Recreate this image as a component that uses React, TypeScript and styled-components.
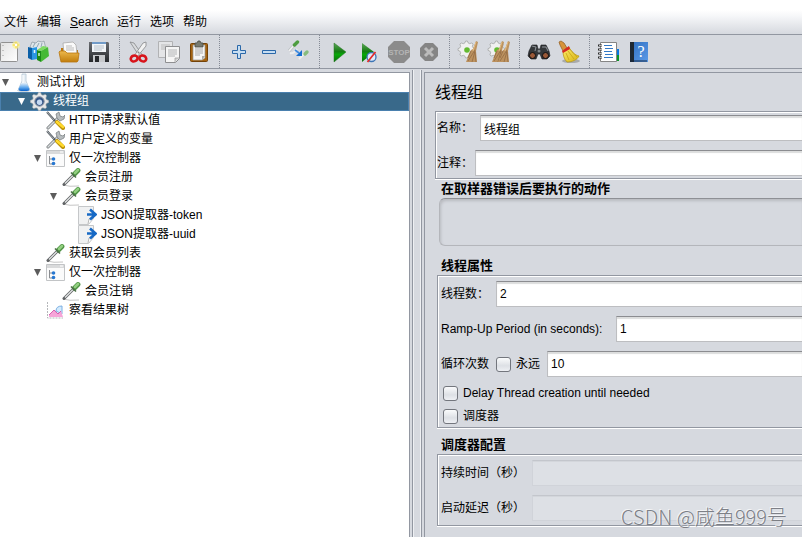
import React, { ReactNode } from "react";
import styled, { createGlobalStyle, css } from "styled-components";

const line = "#9297a1";
const panel = "#d6d9df";

const GlobalStyle = createGlobalStyle`
  * { box-sizing: border-box; }
  body {
    margin: 0;
    background: ${panel};
    color: #000;
    font: 12px/19px "Liberation Sans", "Noto Sans CJK SC", sans-serif;
  }
  button, input { font: inherit; color: inherit; }
`;

const Window = styled.div`
  position: relative;
  display: flex;
  flex-direction: column;
  min-height: 100vh;
  overflow: hidden;
`;

const MenuBar = styled.nav`
  display: flex;
  gap: 9px;
  height: 35px;
  padding: 13px 4px 2px;
  background: linear-gradient(#fff 10px, #f6f7f9 16px, ${panel});
  border-bottom: 1px solid ${line};
`;

const MenuButton = styled.button`
  padding: 0;
  border: 0;
  background: none;
  line-height: 19px;
  white-space: nowrap;
`;

const ToolBar = styled.div`
  display: flex;
  height: 34px;
  margin-left: -6px;
  border-bottom: 1px solid ${line};
`;

const ToolButton = styled.button`
  display: grid;
  place-items: center;
  flex: none;
  width: 30px;
  padding: 0;
  border: 0;
  background: none;
  svg { display: block; width: 24px; height: 24px; }
`;

const Separator = styled.div`
  flex: none;
  width: 5px;
  margin-left: 5px;
  border-left: 1px dotted #858a95;
`;

const Workspace = styled.main`
  display: grid;
  flex: 1;
  grid-template-columns: 410px 14px minmax(0, 1fr);
`;

const Tree = styled.ul`
  margin: 3px 0 0;
  padding: 0;
  list-style: none;
  background: #fff;
  border-top: 1px solid ${line};
  border-right: 1px solid ${line};
`;

const TreeRow = styled.li<{ $level: number; $selected?: boolean }>`
  display: flex;
  align-items: center;
  height: 19px;
  line-height: 21px;
  padding-left: ${(p) => p.$level * 16}px;
  white-space: nowrap;
  ${(p) =>
    p.$selected &&
    css`
      background: #39698a;
      color: #fff;
      box-shadow: inset 0 0 0 1px #4a80ae;
    `}
  > svg { flex: none; width: 19px; height: 19px; margin-right: 4px; }
`;

const Toggle = styled.button<{ $selected?: boolean }>`
  display: grid;
  place-items: center;
  width: 11px;
  height: 19px;
  margin-right: 3px;
  padding: 0;
  border: 0;
  background: none;
  color: ${(p) => (p.$selected ? "#fff" : "#5c5c5c")};
  svg { width: 7px; height: 7px; }
`;

const ToggleSpace = styled.span`
  width: 14px;
`;

const Divider = styled.div`
  margin: 1px 2px 0;
  border: solid ${line};
  border-width: 0 1px;
  box-shadow: inset 1px 0 #eef0f3, inset -1px 0 #eef0f3;
`;

const Editor = styled.form`
  margin-top: 3px;
  padding: 2px 0 0 10px;
  border-top: 1px solid ${line};
  border-left: 1px solid ${line};
`;

const Heading = styled.h1`
  margin: 0;
  font-size: 16px;
  line-height: 36px;
  font-weight: 400;
`;

const Etched = styled.div`
  display: flex;
  flex-direction: column;
  gap: 9px;
  border: 1px solid ${line};
  border-right: 0;
  box-shadow: inset 1px 1px #fff, 0 1px #fff;
`;

const NameGroup = styled(Etched)`
  padding: 3px 0 2px 1px;
`;

const PropertyGroup = styled(Etched)`
  padding: 5px 0 3px 3px;
`;

const SchedulerGroup = styled(PropertyGroup)`
  padding-bottom: 4px;
`;

const Section = styled.section`
  margin: 0 0 0 2px;
`;

const Title = styled.h2<{ $space?: number }>`
  margin: ${(p) => p.$space ?? 0}px 0 0 4px;
  font-size: 13px;
  line-height: 19px;
  font-weight: 700;
  white-space: nowrap;
`;

const ActionBox = styled.div`
  height: 48px;
  margin-left: 2px;
  border: 1px solid #b4b6bb;
  border-top-color: #8e9095;
  border-right: 0;
  border-radius: 6px 0 0 6px;
  box-shadow: inset 1px 2px 3px #b9bbc0;
`;

const FieldRow = styled.div<{ $tight?: boolean }>`
  display: flex;
  align-items: center;
  gap: ${(p) => (p.$tight ? 2 : 7)}px;
  height: 26px;
  line-height: 21px;
  white-space: nowrap;
`;

const FieldLabel = styled.label<{ $width?: number }>`
  min-width: ${(p) => p.$width ?? 0}px;
`;

const TextField = styled.input`
  flex: 1;
  min-width: 0;
  height: 26px;
  padding: 0 3px;
  border: 1px solid #bdbec1;
  border-top-color: #8b8c90;
  border-right: 0;
  border-radius: 0;
  background: #fff;
  box-shadow: inset 0 2px 1px #dcdddd;
  outline: 0;
  &:disabled {
    background: #dde0e5;
    border-color: #d0d3d9;
    border-top-color: #c3c6cc;
    box-shadow: inset 0 1px #d3d6db;
  }
`;

const Checks = styled.div`
  display: grid;
  gap: 8px;
  padding-left: 2px;
`;

const CheckLabel = styled.label`
  display: flex;
  align-items: center;
  gap: 5px;
  height: 15px;
`;

const CheckBox = styled.input`
  appearance: none;
  width: 15px;
  height: 15px;
  margin: 0;
  border: 1px solid #73767d;
  border-radius: 3px;
  background: linear-gradient(#fafbfc, #dde0e5 60%, #eef0f4);
`;

const Watermark = styled.div`
  position: absolute;
  right: 15px;
  bottom: 5px;
  color: rgba(112, 115, 122, 0.9);
  font: 300 20px/30px "Noto Sans CJK SC", sans-serif;
  text-shadow: -1px -1px #f3f4f6;
  pointer-events: none;
`;

const Svg = ({ children, size = 24 }: { children: ReactNode; size?: number }) => (
  <svg viewBox={`0 0 ${size} ${size}`} aria-hidden="true">{children}</svg>
);

const gearPath = (cx: number, cy: number, r: number) =>
  Array.from({ length: 32 }, (_, i) => {
    const a = ((i - 0.5) * Math.PI) / 16;
    const d = i % 4 < 2 ? r : r * 0.78;
    return `${i ? "L" : "M"}${(cx + d * Math.cos(a)).toFixed(2)} ${(cy + d * Math.sin(a)).toFixed(2)}`;
  }).join("") + "Z";

const HiddenSvg = styled.svg`
  position: absolute;
`;

const Defs = () => (
  <HiddenSvg width="0" height="0" aria-hidden="true">
    <defs>
      <linearGradient id="paper" x2="1" y2="1"><stop stopColor="#e2e2e2" /><stop offset="1" stopColor="#fff" /></linearGradient>
      <linearGradient id="folder" y2="1" x2="0"><stop stopColor="#edb94d" /><stop offset="1" stopColor="#c17d0c" /></linearGradient>
      <linearGradient id="dark" y2="1" x2="0"><stop stopColor="#6a6d72" /><stop offset="1" stopColor="#26282b" /></linearGradient>
      <linearGradient id="play" y2="1" x2="0"><stop stopColor="#5fa55b" /><stop offset=".45" stopColor="#157d12" /><stop offset=".6" stopColor="#08a808" /><stop offset="1" stopColor="#087008" /></linearGradient>
      <linearGradient id="book" x2="1" y2="1"><stop stopColor="#2f6fc0" /><stop offset="1" stopColor="#5b9ae8" /></linearGradient>
      <linearGradient id="straw" x2="1" y2="1"><stop stopColor="#fff06a" /><stop offset="1" stopColor="#d6b010" /></linearGradient>
      <linearGradient id="glass" y2="1" x2="0"><stop stopColor="#e4eff8" /><stop offset=".55" stopColor="#61a9ed" /><stop offset="1" stopColor="#0862cd" /></linearGradient>
    </defs>
  </HiddenSvg>
);

const NewIcon = () => (
  <Svg>
    <rect x="3.5" y="2.5" width="17" height="19" rx="1" fill="url(#paper)" stroke="#919191" />
    <path d="M6 5v14" stroke="#999" strokeDasharray="1 4" />
    <circle cx="19" cy="5" r="3.8" fill="#fff394" opacity=".7" />
    <path d="m19 1 1 3 3 1-3 1-1 3-1-3-3-1 3-1z" fill="#f4da39" />
    <circle cx="19" cy="5" r="1.4" fill="#fff" />
  </Svg>
);
const TemplatesIcon = () => (
  <Svg>
    <path d="m3 7 2-5 4 1 2-2 4 1 2-1 2 8-9 3z" fill="#dfe6ea" stroke="#93a0a8" strokeWidth=".8" />
    <path d="m6 7 2-4m2 4 2-4m2 4 1-4" stroke="#8fa5b2" />
    <path d="m1 7 4 1v12l-4-2z" fill="#0a5fa8" /><path d="m5 8 5-1v12l-5 1z" fill="#2b97e6" />
    <path d="M7.5 10v3" stroke="#e4f4ff" strokeWidth="1.6" />
    <path d="m10 10 4 1v11l-4-2z" fill="#1c8a1a" /><path d="m14 11 7-4 1 9-8 6z" fill="#45b934" />
    <path d="m10 10 6-4 5 1-7 4z" fill="#7ddb62" /><path d="M12 13v3" stroke="#e2fadb" strokeWidth="1.4" />
  </Svg>
);
const OpenIcon = () => (
  <Svg>
    <path d="M4 8h6l2 2h9v11H4z" fill="#bd780d" />
    <path d="m6 3 10-1 3 3 1 9H7z" fill="#fafafa" stroke="#aaa" strokeWidth=".8" /><path d="M9 6h6M9 8h8m-8 2h8" stroke="#bbb" />
    <path d="m2 12 1-1h5l2 2h12l-1 8-1 1H4z" fill="url(#folder)" stroke="#b9760f" strokeWidth=".8" />
  </Svg>
);
const SaveIcon = () => (
  <Svg>
    <path d="M2 2h19l1 1v19H2z" fill="url(#dark)" /><path d="M5 2h14v10H5z" fill="#f2f5f8" /><path d="M5 2h14v2H5z" fill="#719bc8" />
    <path d="M7 6h10M7 8h10m-10 2h8" stroke="#b8c1ca" /><path d="M6 15h12v7H6z" fill="#c7c9cc" /><path d="M8 16h4v6H8z" fill="#27292c" />
  </Svg>
);
const CutIcon = () => (
  <Svg>
    <path d="m3 2 4 1 9 13-3 1z" fill="#d9dbdd" stroke="#858789" strokeWidth=".8" /><path d="m19 2-3 1-9 13 3 1L19 6z" fill="#f2f2f2" stroke="#858789" strokeWidth=".8" />
    <ellipse cx="7" cy="18.5" rx="3.5" ry="2.8" fill="none" stroke="#d8141b" strokeWidth="2.6" transform="rotate(-20 7 18)" />
    <ellipse cx="16" cy="18.5" rx="3.5" ry="2.8" fill="none" stroke="#d8141b" strokeWidth="2.6" transform="rotate(20 16 18)" />
    <circle cx="11.5" cy="12.5" r="1" fill="#888" />
  </Svg>
);
const CopyIcon = () => (
  <Svg>
    <path d="M1.5 1.5h14v16h-14z" fill="#e4e5e7" stroke="#b1b2b4" /><path d="M4 5h9M4 7h9M4 9h9" stroke="#bbb" />
    <path d="M8.5 6.5h14v12l-4 4h-10z" fill="#f5f5f5" stroke="#8e8f91" /><path d="M11 10h9m-9 2h9m-9 2h9m-9 2h7" stroke="#b2b4b6" /><path d="M18 22v-4h4" fill="#d2d3d4" stroke="#999" strokeWidth=".7" />
  </Svg>
);
const PasteIcon = () => (
  <Svg>
    <rect x="3.5" y="3.5" width="17" height="18" rx="1" fill="#a66411" stroke="#744308" /><path d="M6 5h12v13l-3 2H6z" fill="#f5f5f5" stroke="#9a9a92" strokeWidth=".7" />
    <path d="M8 9h8m-8 2h8m-8 2h8m-8 2h5" stroke="#aaa" /><path d="M15 20v-4h3z" fill="#aaa" />
    <path d="M8 3h2l1-2h2l1 2h2v4H8z" fill="#777a70" stroke="#494b45" strokeWidth=".8" />
  </Svg>
);
const PlusIcon = () => <Svg><path d="M10.5 5.5h3v5h5v3h-5v5h-3v-5h-5v-3h5z" fill="#c7def2" stroke="#2b68a9" /></Svg>;
const MinusIcon = () => <Svg><path d="M5.5 10.5h13v3h-13z" fill="#c7def2" stroke="#2b68a9" /></Svg>;
const ToggleIcon = () => (
  <Svg>
    <path d="m2 11 6-7" stroke="#b9bdc2" strokeWidth="3" /><path d="m2 11 6-7" stroke="#f2f2f2" strokeWidth="1.8" /><path d="m7.5 5 3-3" stroke="#4e9d40" strokeWidth="3.4" strokeLinecap="round" />
    <path d="M3 13c3 1 5-1 7-4M12 19l6-6" stroke="#eee" strokeWidth="2" fill="none" /><path d="m18 14 2-2" stroke="#87bc7d" strokeWidth="3.4" strokeLinecap="round" />
    <path d="m8 10 4 3" stroke="#3f8be0" strokeWidth="1.6" fill="none" /><path d="m15 10v6H9z" fill="#176fd1" />
  </Svg>
);
const PlayIcon = () => <Svg><path d="m7 3 12 9L7 22z" fill="url(#play)" stroke="#247622" strokeWidth=".5" /></Svg>;
const PlayNoPauseIcon = () => (
  <Svg><path d="m5 3 12 9L5 22z" fill="url(#play)" /><circle cx="14.5" cy="17" r="4.5" fill="#dfeafb" stroke="#3d75b4" strokeWidth="1.3" /><path d="m10.5 22 8-10" stroke="#e32929" strokeWidth="1.7" /></Svg>
);
const octagon = (a: number, b: number, c: number) => `M${a + c} ${a}H${b - c}L${b} ${a + c}V${b - c}L${b - c} ${b}H${a + c}L${a} ${b - c}V${a + c}Z`;
const StopIcon = () => (
  <Svg><path d={octagon(1, 23, 6)} fill="#8b8b8b" /><text x="12" y="15" textAnchor="middle" fontSize="8" fontWeight="700" fill="#b4b4b4" fontFamily="Liberation Sans">STOP</text></Svg>
);
const ShutdownIcon = () => <Svg><path d={octagon(3, 21, 5)} fill="#858585" /><path d="m8 8 8 8m0-8-8 8" stroke="#bcbcbc" strokeWidth="3" /></Svg>;
const Gear = () => <><path d={gearPath(9.5, 9.5, 8.5)} fill="#f0f0f0" stroke="#a3a6a5" strokeWidth=".8" /><circle cx="10" cy="10" r="2.8" fill="#64ba31" /></>;
const Straw = ({ x }: { x: number }) => (
  <g transform={`translate(${x})`}>
    <path d="m19 1 2 1-2 9 1 11H9c2-4 2-8 5-12l2-1z" fill="#bc925f" /><path d="m18 10-7 11m7-10-3 11m3-10 1 10M14 11l-3 7" stroke="#8d6641" strokeWidth=".7" /><path d="m19 2-3 9" stroke="#e1b97e" />
  </g>
);
const ClearIcon = () => <Svg><Gear /><Straw x={0} /></Svg>;
const ClearAllIcon = () => <Svg><Gear /><Straw x={-4} /><Straw x={2} /></Svg>;
const SearchIcon = () => (
  <Svg>
    <path d="m2 11 3-6h5l1 4h2l1-4h5l3 6 1 5-3 3h-5l-2-5h-2l-2 5H4l-3-3z" fill="#34373a" stroke="#181a1c" strokeWidth=".6" />
    <path d="m5 6 4 1-1 4m7-4h4l2 4" stroke="#8f9499" fill="none" /><circle cx="5.5" cy="15.5" r="3" fill="#9a5938" stroke="#0f1012" /><circle cx="18.5" cy="15.5" r="3" fill="#9a5938" stroke="#0f1012" /><circle cx="12" cy="11" r="1.5" fill="#82878a" />
  </Svg>
);
const BroomIcon = () => (
  <Svg>
    <ellipse cx="14" cy="21" rx="9" ry="2" fill="#a8aaab" /><path d="m2 2 2-1 3 2 3 5-4 3-3-6z" fill="#d7943b" stroke="#98642a" strokeWidth=".8" />
    <path d="m6 11 6-4c2 5 6 8 10 9-2 4-7 6-12 6-3-3-4-7-4-11z" fill="url(#straw)" stroke="#b99a1d" strokeWidth=".8" /><path d="m5 11 7-5 1 3-7 4z" fill="#d52a22" /><path d="m9 13 3 7m-1-9 6 8m-4-10 7 8" stroke="#c8a317" strokeWidth=".8" />
  </Svg>
);
const FunctionIcon = () => (
  <Svg>
    <path d="M18 9h4v6h-4z" fill="#0875e1" /><path d="M18 15h4v6h-4z" fill="#0b9526" /><path d="M3.5 2.5h16v19h-16z" fill="#fff" stroke="#858585" />
    <path d="M7 5.5h8M8 8.5h8m-9 3h8m-7 3h8m-9 3h9" stroke="#3479c6" />
    <path d="M1 5.5h4M1 9.5h4m-4 4h4m-4 4h4" stroke="#28292a" strokeWidth="2" /><path d="M2 5.5h3M2 9.5h3m-3 4h3m-3 4h3" stroke="#ddd" strokeWidth=".8" />
  </Svg>
);
const HelpIcon = () => (
  <Svg><path d="M3 2h18v20H3z" fill="url(#book)" /><path d="M3 2h4v20H3z" fill="#1f2933" /><path d="M3 21h17" stroke="#182a44" /><text x="14" y="17" textAnchor="middle" fontSize="16" fill="#fff" fontFamily="Liberation Serif">?</text></Svg>
);

const FlaskIcon = () => (
  <Svg size={19}><ellipse cx="10" cy="17.5" rx="7" ry="1.3" fill="#cdd5dc" /><path d="M8 1h4v7l3.5 8q0 2-2.5 2H7q-2.5 0-2.5-2L8 8z" fill="#e7eff5" stroke="#b5c6d4" strokeWidth=".8" /><path d="m7.3 10-2.8 6q0 2 2.5 2h6q2.5 0 2.5-2l-2.8-6z" fill="url(#glass)" /><path d="M9 2v8" stroke="#fff" /></Svg>
);
const GearIcon = () => (
  <Svg size={19}><path d={gearPath(9.5, 9.5, 9.2)} fill="#e6e7e8" stroke="#a4a9ad" strokeWidth=".6" /><circle cx="9.5" cy="9.5" r="4.7" fill="#345587" stroke="#8a93a0" /><circle cx="9.5" cy="10.3" r="2.7" fill="#c6daf2" /></Svg>
);
const ToolsIcon = () => (
  <Svg size={19}>
    <path d="m2 17 10-10" stroke="#73787b" strokeWidth="3" strokeLinecap="round" /><path d="m2 17 10-10" stroke="#d9dddd" strokeWidth="1.5" strokeLinecap="round" />
    <path d="m11 7-1-4 3-2 1 4 3 1 2-2-1 4-4 2z" fill="#b8bdbf" stroke="#73787b" strokeWidth=".7" />
    <path d="m1 1 8 9" stroke="#50575d" strokeWidth="2" /><path d="m1 1 7 8" stroke="#cbd1d6" strokeWidth=".7" /><path d="m11 11 6 6" stroke="#bd9208" strokeWidth="4" strokeLinecap="round" /><path d="m11 11 6 5" stroke="#ffd92c" strokeWidth="2.5" strokeLinecap="round" />
  </Svg>
);
const ControllerIcon = () => (
  <Svg size={19}><path d="M.5 1.5h18v16H.5z" fill="#fbfbfb" stroke="#c2c4c6" /><path d="M1 2h17v3H1z" fill="#d9dadb" /><path d="M14 3h3" stroke="#fff" /><path d="M3.5 7v8H7M4 10h3" stroke="#8a8d91" fill="none" /><circle cx="7.5" cy="10" r="1.8" fill="#2777d0" /><circle cx="7.5" cy="14.5" r="1.8" fill="#2777d0" /></Svg>
);
const SamplerIcon = () => (
  <Svg size={19}><path d="M1 17q6 2 16 1" stroke="#c5c5c5" fill="none" /><path d="m2 16.5 9-9" stroke="#606365" strokeWidth="3" strokeLinecap="round" /><path d="m3 15.5 8-8" stroke="#dfe2e2" strokeWidth="1.4" /><path d="m12.5 6 3.5-3.5" stroke="#4f9344" strokeWidth="4.8" strokeLinecap="round" /><path d="m13 5 3-3" stroke="#92cf80" strokeWidth="2.6" strokeLinecap="round" /><path d="m9 4.5 5 5" stroke="#4b7047" strokeWidth="1.6" /></Svg>
);
const ExtractorIcon = () => (
  <Svg size={19}><path d="M.5.5h15v12l-5 6H.5z" fill="#f0f1f2" stroke="#c5c7c9" /><path d="m10 18 1-5 4-1" fill="#fff" stroke="#aaa" strokeWidth=".8" /><path d="M9 8.5h8M12 3.5l5.5 5-5.5 5" stroke="#1769c5" strokeWidth="2.6" fill="none" /></Svg>
);
const ResultsIcon = () => (
  <Svg size={19}><path d="M1.5 1v16H17" stroke="#b5b7ba" strokeDasharray="2 1" fill="none" /><path d="M10 10q0-5 6-5v8z" fill="#d3ebfd" stroke="#7baee2" /><path d="m3 14 5-5 4 4 3-3 2 6H3z" fill="#f6a5d8" /><path d="m3 14 5-5 4 4 3-3" stroke="#d561b0" fill="none" /></Svg>
);

const tools: [string, () => React.JSX.Element][][] = [
  [["新建", NewIcon], ["模板", TemplatesIcon], ["打开", OpenIcon], ["保存", SaveIcon]],
  [["剪切", CutIcon], ["复制", CopyIcon], ["粘贴", PasteIcon]],
  [["展开", PlusIcon], ["折叠", MinusIcon], ["切换", ToggleIcon]],
  [["启动", PlayIcon], ["不停顿开始", PlayNoPauseIcon], ["停止", StopIcon], ["关闭", ShutdownIcon]],
  [["清除", ClearIcon], ["清除全部", ClearAllIcon]],
  [["搜索", SearchIcon], ["重置搜索", BroomIcon]],
  [["函数助手", FunctionIcon], ["帮助", HelpIcon]],
];

type Node = { text: string; level: number; icon: () => React.JSX.Element; open?: boolean; selected?: boolean };
const nodes: Node[] = [
  { text: "测试计划", level: 0, icon: FlaskIcon, open: true },
  { text: "线程组", level: 1, icon: GearIcon, open: true, selected: true },
  { text: "HTTP请求默认值", level: 2, icon: ToolsIcon },
  { text: "用户定义的变量", level: 2, icon: ToolsIcon },
  { text: "仅一次控制器", level: 2, icon: ControllerIcon, open: true },
  { text: "会员注册", level: 3, icon: SamplerIcon },
  { text: "会员登录", level: 3, icon: SamplerIcon, open: true },
  { text: "JSON提取器-token", level: 4, icon: ExtractorIcon },
  { text: "JSON提取器-uuid", level: 4, icon: ExtractorIcon },
  { text: "获取会员列表", level: 2, icon: SamplerIcon },
  { text: "仅一次控制器", level: 2, icon: ControllerIcon, open: true },
  { text: "会员注销", level: 3, icon: SamplerIcon },
  { text: "察看结果树", level: 2, icon: ResultsIcon },
];

const Field = ({ id, label, value = "", tight, disabled, labelWidth, children }: { id: string; label: string; value?: string; tight?: boolean; disabled?: boolean; labelWidth?: number; children?: ReactNode }) => (
  <FieldRow $tight={tight}>
    <FieldLabel htmlFor={id} $width={labelWidth}>{label}</FieldLabel>
    {children}
    <TextField id={id} type="text" defaultValue={value} disabled={disabled} />
  </FieldRow>
);

export default function App() {
  return (
    <Window>
      <GlobalStyle />
      <Defs />
      <MenuBar>
        <MenuButton>文件</MenuButton>
        <MenuButton>编辑</MenuButton>
        <MenuButton><u>S</u>earch</MenuButton>
        <MenuButton>运行</MenuButton>
        <MenuButton>选项</MenuButton>
        <MenuButton>帮助</MenuButton>
      </MenuBar>
      <ToolBar role="toolbar">
        {tools.map((group, i) => (
          <React.Fragment key={i}>
            {i > 0 && <Separator />}
            {group.map(([name, Icon]) => (
              <ToolButton key={name} type="button" aria-label={name}><Icon /></ToolButton>
            ))}
          </React.Fragment>
        ))}
      </ToolBar>
      <Workspace>
        <Tree role="tree">
          {nodes.map(({ text, level, icon: Icon, open, selected }, i) => (
            <TreeRow key={i} role="treeitem" aria-level={level + 1} aria-selected={!!selected} $level={level} $selected={selected}>
              {open ? (
                <Toggle type="button" aria-label={`折叠 ${text}`} $selected={selected}>
                  <svg viewBox="0 0 7 7"><path d="M0 0h7L3.5 7z" fill="currentColor" /></svg>
                </Toggle>
              ) : <ToggleSpace />}
              <Icon />
              <span>{text}</span>
            </TreeRow>
          ))}
        </Tree>
        <Divider role="separator" />
        <Editor>
          <Heading>线程组</Heading>
          <NameGroup>
            <Field id="name" label="名称：" value="线程组" />
            <Field id="comment" label="注释：" tight />
          </NameGroup>
          <Section>
            <Title>在取样器错误后要执行的动作</Title>
            <ActionBox />
          </Section>
          <Section>
            <Title $space={10}>线程属性</Title>
            <PropertyGroup>
              <Field id="threads" label="线程数：" value="2" />
              <Field id="ramp" label="Ramp-Up Period (in seconds):" value="1" labelWidth={168} />
              <Field id="loops" label="循环次数" value="10">
                <CheckLabel><CheckBox type="checkbox" />永远</CheckLabel>
              </Field>
              <Checks>
                <CheckLabel><CheckBox type="checkbox" />Delay Thread creation until needed</CheckLabel>
                <CheckLabel><CheckBox type="checkbox" />调度器</CheckLabel>
              </Checks>
            </PropertyGroup>
          </Section>
          <Section>
            <Title $space={7}>调度器配置</Title>
            <SchedulerGroup>
              <Field id="duration" label="持续时间（秒）" disabled />
              <Field id="delay" label="启动延迟（秒）" disabled />
            </SchedulerGroup>
          </Section>
        </Editor>
      </Workspace>
      <Watermark>CSDN @咸鱼999号</Watermark>
    </Window>
  );
}
